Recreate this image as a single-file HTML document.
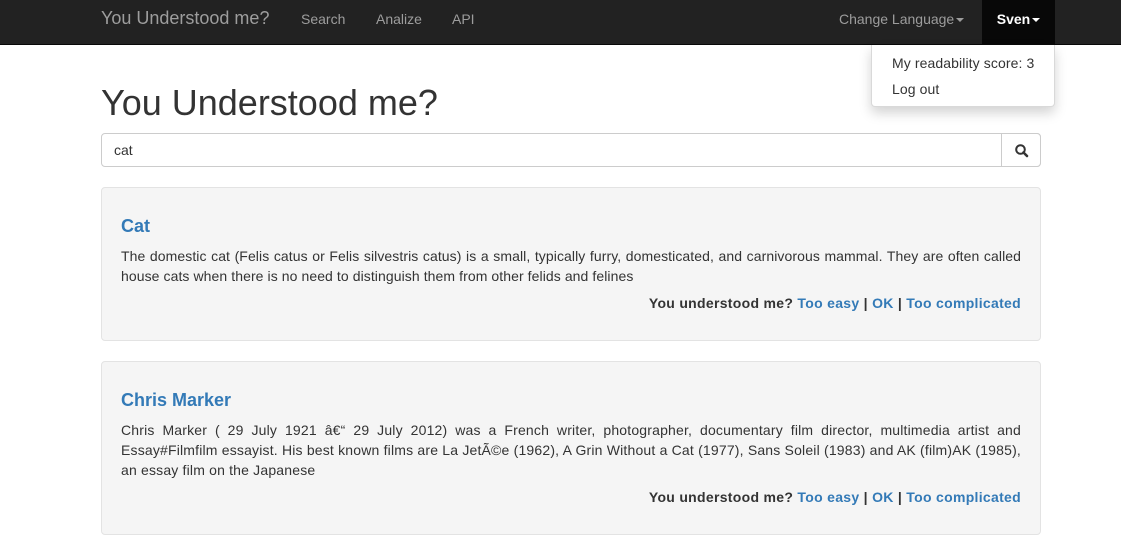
<!DOCTYPE html>
<html><head><style>
*{box-sizing:border-box;margin:0;padding:0}
body{font-family:"Liberation Sans",Arial,sans-serif;font-size:14px;color:#333;background:#fff;width:1121px;height:545px;overflow:hidden;position:relative}
.nav{position:absolute;top:0;left:0;width:1121px;height:45px;background:#222;border-bottom:1px solid #080808}
.nav span{position:absolute;top:0;line-height:38px;color:#9d9d9d}
.brand{font-size:18px;left:101px}
.sven{left:982px;width:73px;height:44px;background:#080808;color:#fff!important;font-weight:bold;text-align:center}
.caret{display:inline-block;width:0;height:0;border-top:4px solid;border-left:4px solid transparent;border-right:4px solid transparent;vertical-align:middle;margin-left:2px}
.dd{position:absolute;left:871px;top:45px;width:184px;height:62px;background:#fff;border:1px solid rgba(0,0,0,.15);border-top:none;border-radius:0 0 4px 4px;box-shadow:0 6px 12px rgba(0,0,0,.175);padding-top:5px}
.dd div{padding-left:20px;line-height:26px;color:#333;letter-spacing:.1px}
h1{position:absolute;left:101px;top:83px;font-size:36px;font-weight:500;line-height:40px}
.inp{position:absolute;left:101px;top:133px;width:940px;height:34px;border:1px solid #ccc;border-radius:4px;padding:0 12px;line-height:32px}
.btn{position:absolute;right:-1px;top:-1px;width:40px;height:34px;border:1px solid #ccc;border-radius:0 4px 4px 0;background:#fff}
.well{position:absolute;left:101px;width:940px;background:#f5f5f5;border:1px solid #e3e3e3;border-radius:4px;padding:19px}
.well h3{color:#337ab7;font-size:18px;font-weight:bold;margin-top:8px;line-height:22px;margin-bottom:9px}
.well p{line-height:20px;text-align:justify;letter-spacing:.18px}
.r{text-align:right;font-weight:bold;margin-top:7px;line-height:20px;letter-spacing:.3px}
.r a{color:#337ab7}
</style></head><body>
<div class="nav">
<span class="brand" style="line-height:37px">You Understood me?</span>
<span style="left:301px">Search</span>
<span style="left:376px">Analize</span>
<span style="left:452px">API</span>
<span style="left:839px">Change Language<b class="caret"></b></span>
<span class="sven">Sven<b class="caret"></b></span>
</div>
<div class="dd"><div>My readability score: 3</div><div>Log out</div></div>
<h1>You Understood me?</h1>
<div class="inp">cat<div class="btn"><svg width="40" height="34" viewBox="0 0 40 34"><circle cx="18.5" cy="15.5" r="4.3" fill="none" stroke="#333" stroke-width="2"/><path d="M21.5 18.5l3.5 3.5" stroke="#333" stroke-width="2.6" stroke-linecap="round"/></svg></div></div>
<div class="well" style="top:187px;height:154px">
<h3>Cat</h3>
<p style="letter-spacing:.08px">The domestic cat (Felis catus or Felis silvestris catus) is a small, typically furry, domesticated, and carnivorous mammal. They are often called house cats when there is no need to distinguish them from other felids and felines</p>
<div class="r">You understood me? <a>Too easy</a> | <a>OK</a> | <a>Too complicated</a></div>
</div>
<div class="well" style="top:361px;height:174px">
<h3>Chris Marker</h3>
<p>Chris Marker ( 29 July 1921 â€“ 29 July 2012) was a French writer, photographer, documentary film director, multimedia artist and Essay#Filmfilm essayist. His best known films are La JetÃ©e (1962), A Grin Without a Cat (1977), Sans Soleil (1983) and AK (film)AK (1985), an essay film on the Japanese</p>
<div class="r">You understood me? <a>Too easy</a> | <a>OK</a> | <a>Too complicated</a></div>
</div>
</body></html>
